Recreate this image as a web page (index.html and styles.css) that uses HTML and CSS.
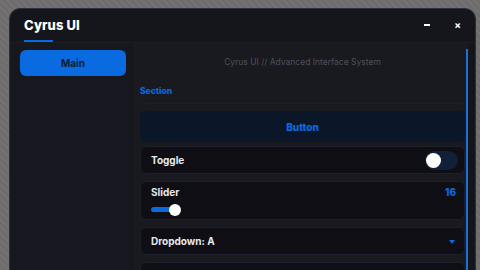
FILE: index.html
```html
<!DOCTYPE html>
<html lang="en">

<head>
    <meta charset="UTF-8" />
    <title>Cyrus UI</title>
    <link rel="stylesheet" href="styles.css">
</head>

<body>
    <div class="window">
        <div class="titlebar">
            <div class="title">Cyrus UI</div>
            <div class="controls">
                <span class="ctrl min"></span>
                <span class="ctrl close">&times;</span>
            </div>
        </div>

        <div class="main">
            <div class="sidebar">
                <div class="tab active">Main</div>
            </div>

            <div class="content">
                <div class="scroll">
                    <div class="subtitle">Cyrus UI // Advanced Interface System</div>
                    <div class="section">Section</div>

                    <div class="button">Button</div>

                    <div class="row">
                        <span class="label">Toggle</span>
                        <div class="switch"></div>
                    </div>

                    <div class="row slider-row">
                        <div class="slider-head">
                            <span class="label">Slider</span>
                            <span class="value">16</span>
                        </div>
                        <div class="slider">
                            <div class="fill"></div>
                            <div class="knob"></div>
                        </div>
                    </div>

                    <div class="row">
                        <span class="label">Dropdown: A</span>
                        <span class="arrow"></span>
                    </div>

                    <div class="row"></div>
                </div>
            </div>
        </div>
    </div>
</body>

</html>
```

FILE: styles.css
```css
body {
    margin: 0;
    height: 270px;
    overflow: hidden;
    font-family: 'Inter', 'Liberation Sans', sans-serif;
    background: #6e6c6d;
    background-image: repeating-linear-gradient(45deg, rgba(255, 255, 255, 0.04) 0 2px, transparent 2px 5px);
}

.window {
    margin: 8px 0 0 9px;
    width: 467px;
    height: 290px;
    background: #15151c;
    border: 1px solid #2a2f3d;
    border-radius: 11px;
    box-sizing: border-box;
    display: flex;
    flex-direction: column;
    overflow: hidden;
}

.titlebar {
    height: 33px;
    flex-shrink: 0;
    display: flex;
    align-items: flex-start;
    justify-content: space-between;
    padding: 0 14px 0 14px;
    border-bottom: 1px solid #1d1d24;
}

.title {
    margin-top: 8px;
    color: #ffffff;
    font-size: 13px;
    font-weight: 800;
    letter-spacing: 0.1px;
}

.title::after {
    content: "";
    display: block;
    width: 29px;
    height: 2px;
    margin-top: 7px;
    background: #0a6ae0;
}

.controls {
    display: flex;
    align-items: center;
    gap: 24px;
    margin-top: 10px;
}

.ctrl {
    color: #ffffff;
    font-size: 10px;
    font-weight: 700;
    line-height: 12px;
}

.min {
    width: 6px;
    height: 2px;
    background: #ffffff;
}

.main {
    flex: 1;
    display: flex;
}

.sidebar {
    width: 120px;
    flex-shrink: 0;
    padding: 7px 4px 0 10px;
    box-sizing: border-box;
    background: #17171f;
}

.tab {
    height: 26px;
    display: flex;
    align-items: center;
    justify-content: center;
    border-radius: 6px;
    font-size: 10px;
    font-weight: 700;
    color: #0b1a33;
}

.tab.active {
    background: #0a6ae0;
}

.content {
    flex: 1;
    margin: 0 7px 0 3px;
    background: #191920;
}

.scroll {
    margin-top: 6px;
    height: 260px;
    padding: 7px 1px 0 7px;
    border-right: 2px solid #1f6fd6;
    display: flex;
    flex-direction: column;
    gap: 7px;
}

.subtitle {
    text-align: center;
    font-size: 8.5px;
    color: #4f4f59;
    height: 12px;
    line-height: 12px;
}

.section {
    margin-top: 11px;
    height: 17px;
    font-size: 8.5px;
    font-weight: 800;
    color: #0a6ae0;
    border-bottom: 1px solid #1b1d27;
}

.button {
    height: 31px;
    margin-bottom: -3px;
    flex-shrink: 0;
    display: flex;
    align-items: center;
    justify-content: center;
    background: #0b1729;
    border-radius: 6px;
    font-size: 10px;
    font-weight: 800;
    color: #0a6ae0;
}

.row {
    height: 28px;
    box-sizing: border-box;
    display: flex;
    align-items: center;
    justify-content: space-between;
    padding: 0 6px 0 10px;
    background: #0e0e14;
    border: 1px solid #1b1f2e;
    border-radius: 6px;
    flex-shrink: 0;
}

.label {
    font-size: 10px;
    font-weight: 700;
    color: #e9e9ec;
}

.switch {
    position: relative;
    width: 33px;
    height: 19px;
    background: #112039;
    border-radius: 10px;
}

.switch::after {
    content: "";
    position: absolute;
    top: 2px;
    left: 1px;
    width: 15px;
    height: 15px;
    border-radius: 50%;
    background: #ffffff;
}

.slider-row {
    height: 39px;
    flex-direction: column;
    align-items: stretch;
    justify-content: flex-start;
    padding: 3px 8px 0 10px;
}

.slider-head {
    display: flex;
    justify-content: space-between;
    line-height: 14px;
}

.value {
    font-size: 10px;
    font-weight: 800;
    color: #0a6ae0;
}

.slider {
    position: relative;
    height: 12px;
    margin-top: 5px;
}

.fill {
    position: absolute;
    top: 3px;
    left: 0;
    width: 24px;
    height: 5px;
    border-radius: 3px;
    background: #0a6ae0;
}

.knob {
    position: absolute;
    top: 0;
    left: 18px;
    width: 12px;
    height: 12px;
    border-radius: 50%;
    background: #ffffff;
}

.arrow {
    width: 0;
    height: 0;
    margin: 2px 3px 0 0;
    border-left: 3px solid transparent;
    border-right: 3px solid transparent;
    border-top: 4px solid #0a6ae0;
}
```
